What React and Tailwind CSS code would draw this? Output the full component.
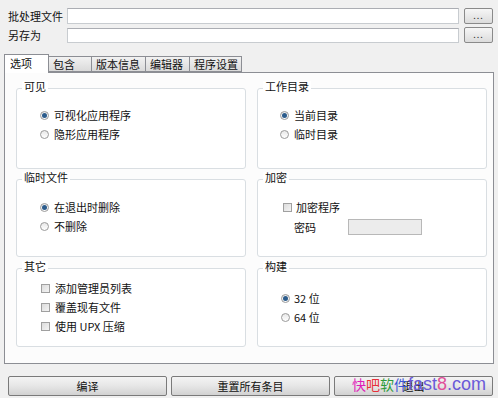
import React from "react";

const font = { fontFamily: '"Noto Sans CJK SC", "Noto Sans", sans-serif' };

function Radio({ checked, label, gap = "gap-[5px]" }) {
    return (
        <div className={`flex items-center h-[19px] ${gap}`}>
            <span className="w-[9px] h-[9px] rounded-full border border-[#9a9a9a] bg-gradient-to-b from-[#e8e8e8] to-[#ffffff] flex items-center justify-center">
                {checked && <span className="w-[5px] h-[5px] rounded-full bg-[#2c5c8c]"></span>}
            </span>
            <span className="leading-none">{label}</span>
        </div>
    );
}

function Check({ label, gap = "gap-[5px]" }) {
    return (
        <div className={`flex items-center h-[19px] ${gap}`}>
            <span className="w-[9px] h-[9px] border border-[#a0a0a0] bg-gradient-to-br from-[#dcdcdc] to-[#f4f4f4]"></span>
            <span className="leading-none">{label}</span>
        </div>
    );
}

function Group({ title, className = "", children }) {
    return (
        <div className={`relative border border-[#d9dee2] rounded-[3px] bg-white ${className}`}>
            <span className="absolute -top-[8px] left-[5px] bg-white px-[2px] leading-none text-[11px]">{title}</span>
            {children}
        </div>
    );
}

function SmallButton() {
    return (
        <button className="w-[29px] h-[16px] border border-[#8a8a8a] rounded-[2px] bg-gradient-to-b from-[#f6f6f6] to-[#dcdcdc] flex items-end justify-center pb-[3px]">
            <span className="text-[9px] leading-none tracking-[1px] text-[#333]">...</span>
        </button>
    );
}

function BigButton({ label }) {
    return (
        <button className="flex-1 h-[20px] border border-[#7a7a7a] rounded-[2px] bg-gradient-to-b from-[#f4f4f4] via-[#e6e6e6] to-[#d2d2d2] text-[11px] leading-none">
            {label}
        </button>
    );
}

export default function App() {
    const tabs = [
        { label: "包含", w: "w-[43px]" },
        { label: "版本信息", w: "w-[54px]" },
        { label: "编辑器", w: "w-[44px]" },
        { label: "程序设置", w: "w-[52px]" },
    ];

    return (
        <div className="w-[498px] h-[398px] bg-[#f0f0f0] text-[11px] text-[#111] relative overflow-hidden" style={font}>
            {/* file rows */}
            <div className="pt-[8px] pl-[8px] pr-[5px] flex flex-col gap-[3px]">
                <div className="flex items-center">
                    <span className="w-[59px] leading-none">批处理文件</span>
                    <div className="flex-1 h-[16px] border border-[#c8ccd0] border-t-[#abadb3] bg-white"></div>
                    <div className="ml-[5px]"><SmallButton /></div>
                </div>
                <div className="flex items-center">
                    <span className="w-[59px] leading-none">另存为</span>
                    <div className="flex-1 h-[15px] border border-[#c8ccd0] border-t-[#abadb3] bg-white"></div>
                    <div className="ml-[5px]"><SmallButton /></div>
                </div>
            </div>

            {/* tabs */}
            <div className="mt-[11px] pl-[4px] flex items-end h-[18px] relative z-10">
                <div className="w-[45px] h-[19px] -mb-px border border-[#8c8e94] border-b-0 bg-white pl-[5px] pt-[3px] leading-none">选项</div>
                {tabs.map((t) => (
                    <div key={t.label} className={`${t.w} h-[16px] border border-[#8c8e94] border-l-0 bg-gradient-to-b from-[#f2f2f2] to-[#dadada] pl-[4px] pt-[2px] leading-none`}>
                        {t.label}
                    </div>
                ))}
            </div>

            {/* panel */}
            <div className="ml-[4px] mr-[4px] h-[292px] border border-[#8c8e94] bg-[#fcfcfc] pt-[15px] pl-[11px] pr-[6px] grid grid-cols-2 gap-x-[11px] content-start">
                <div className="flex flex-col gap-[10px]">
                    <Group title="可见" className="h-[81px] pl-[23px] pt-[17px]">
                        <Radio checked label="可视化应用程序" />
                        <Radio label="隐形应用程序" />
                    </Group>
                    <Group title="临时文件" className="h-[78px] pl-[23px] pt-[18px]">
                        <Radio checked label="在退出时删除" />
                        <Radio label="不删除" />
                    </Group>
                    <Group title="其它" className="h-[79px] pl-[24px] pt-[10px] mt-[1px]">
                        <Check label="添加管理员列表" />
                        <Check label="覆盖现有文件" />
                        <Check label="使用 UPX 压缩" />
                    </Group>
                </div>
                <div className="flex flex-col gap-[10px]">
                    <Group title="工作目录" className="h-[81px] pl-[22px] pt-[17px]">
                        <Radio checked label="当前目录" />
                        <Radio label="临时目录" />
                    </Group>
                    <Group title="加密" className="h-[78px] pl-[25px] pt-[18px]">
                        <Check label="加密程序" gap="gap-[4px]" />
                        <div className="flex items-center mt-[2px] pl-[11px]">
                            <span className="w-[54px] leading-none">密码</span>
                            <div className="w-[74px] h-[16px] border border-[#b8b8b8] bg-[#ececec]"></div>
                        </div>
                    </Group>
                    <Group title="构建" className="h-[79px] pl-[23px] pt-[20px] mt-[1px]">
                        <Radio checked label="32 位" gap="gap-[4px]" />
                        <Radio label="64 位" gap="gap-[4px]" />
                    </Group>
                </div>
            </div>

            {/* bottom buttons */}
            <div className="mt-[12px] pl-[8px] pr-[5px] flex gap-[4px]">
                <BigButton label="编译" />
                <BigButton label="重置所有条目" />
                <BigButton label="退出" />
            </div>

            {/* watermark */}
            <div className="absolute left-[352px] top-[375px] flex items-baseline text-[14px] leading-none" style={{ fontFamily: '"Noto Sans CJK SC", sans-serif' }}>
                <span className="text-[#e01cb8]">快</span>
                <span className="text-[#e8303a]">吧</span>
                <span className="text-[#2e9a3a]">软</span>
                <span className="text-[#3d56d6]">件</span>
                <span className="text-[#6a5ad8] font-['Liberation_Sans',sans-serif] text-[18px]">fast<span className="text-[#e0509a]">8</span>.com</span>
            </div>
        </div>
    );
}
